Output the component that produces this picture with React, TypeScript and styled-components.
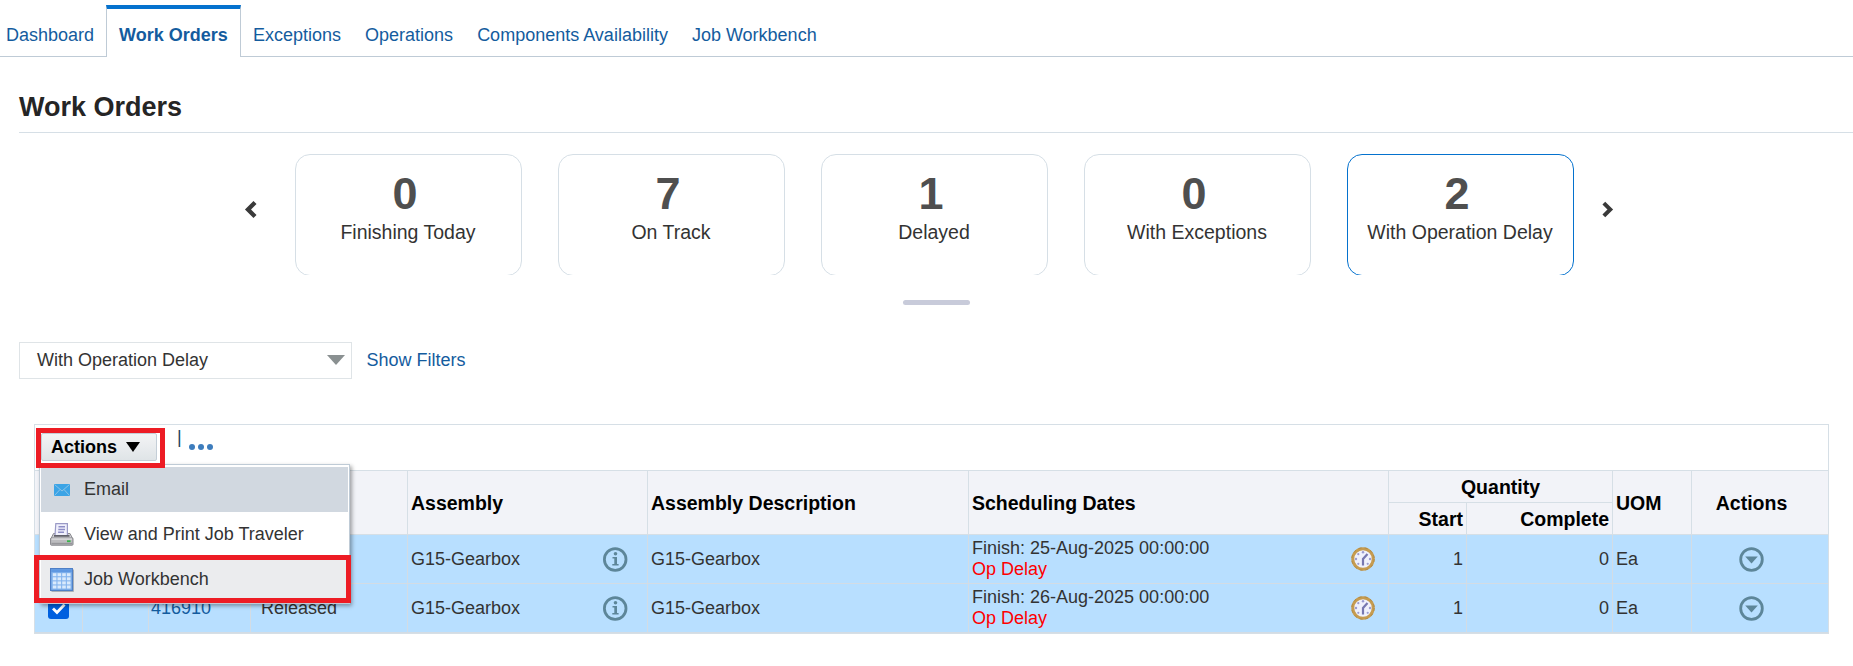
import React from 'react';
import styled, { createGlobalStyle } from 'styled-components';

const GlobalStyle = createGlobalStyle`
  * { box-sizing: border-box; }
  body { margin: 0; background: #fff; overflow: hidden; }
  #root { font-family: "Liberation Sans", Arial, sans-serif; font-size: 18px; color: #333; }
`;

const Page = styled.div`
  width: 1853px;
  height: 666px;
  overflow: hidden;
  display: flex;
  flex-direction: column;
`;

const TabBar = styled.nav`
  display: flex;
  height: 57px;
  padding-top: 5px;
`;

const Tab = styled.a<{ $active?: boolean; $first?: boolean }>`
  display: block;
  height: 52px;
  line-height: 20px;
  color: #145c9e;
  white-space: nowrap;
  padding: ${p => (p.$active ? '16px 11px 0 12px' : '20px 12px 0')};
  ${p => p.$first && 'padding-left: 6px; width: 106px;'}
  ${p => p.$active
    ? 'width: 135px; font-weight: bold; border: solid #bfcbd6; border-width: 4px 1px 0; border-top-color: #0572ce;'
    : 'border-bottom: 1px solid #bfcbd6;'}
`;

const TabFill = styled.div`
  flex: 1;
  border-bottom: 1px solid #bfcbd6;
`;

const Title = styled.h1`
  margin: 0 0 0 19px;
  height: 76px;
  padding-top: 34px;
  line-height: 32px;
  font-size: 27px;
  color: #252525;
  border-bottom: 1px solid #d6dfe6;
`;

const Carousel = styled.section`
  display: flex;
  height: 142px;
  padding: 21px 0 0 244px;
  overflow: hidden;
`;

const Arrow = styled.button<{ $next?: boolean }>`
  width: ${p => (p.$next ? '40px' : '51px')};
  height: 19px;
  margin: 46px 0 0;
  padding: 0 0 0 ${p => (p.$next ? '28px' : '0')};
  border: 0;
  background: none;
  display: flex;
`;

const Cards = styled.div`
  display: flex;
  gap: 36px;
`;

const Card = styled.div<{ $selected?: boolean }>`
  width: 227px;
  height: 122px;
  flex: none;
  border: 1px solid ${p => (p.$selected ? '#0572ce' : '#d6dfe6')};
  border-radius: 15px;
  display: flex;
  flex-direction: column;
  align-items: center;
  padding-top: 14px;
`;

const Count = styled.strong`
  font-size: 45px;
  line-height: 50px;
  color: #4f4f4f;
  padding-right: 7px;
`;

const CardLabel = styled.span`
  margin-top: 1px;
  padding-right: 1px;
  font-size: 19.5px;
  line-height: 24px;
  color: #333;
  white-space: nowrap;
`;

const Splitter = styled.div`
  width: 67px;
  height: 5px;
  margin: 25px 0 0 903px;
  border-radius: 3px;
  background: #c8cbda;
`;

const FilterBar = styled.div`
  display: flex;
  align-items: center;
  height: 37px;
  margin: 37px 0 0 19px;
`;

const Select = styled.div`
  display: flex;
  justify-content: space-between;
  align-items: center;
  width: 333px;
  height: 37px;
  padding: 0 6px 1px 17px;
  border: 1px solid #dfe4e7;
`;

const FilterLink = styled.a`
  margin-left: 14.5px;
  padding-bottom: 1px;
  color: #145c9e;
`;

const Panel = styled.section`
  position: relative;
  width: 1795px;
  margin: 45px 0 0 34px;
  border: 1px solid #d6dfe6;
`;

const Toolbar = styled.div`
  display: flex;
  height: 46px;
  padding: 3px 0 0 1px;
  border-bottom: 1px solid #d6dfe6;
`;

const Highlight = styled.div`
  width: 129px;
  height: 40px;
  flex: none;
  border: 5px solid #ed1c24;
  background: #fff;
  position: relative;
  z-index: 3;
`;

const ActionButton = styled.button`
  display: flex;
  align-items: center;
  gap: 9px;
  width: 116px;
  height: 28px;
  padding: 0 0 0 9px;
  border: 1px solid #c4ced7;
  border-radius: 2px;
  background: linear-gradient(#f3f4f5, #dfe4e7);
  font: bold 18px "Liberation Sans", Arial, sans-serif;
  color: #000;
`;

const Bar = styled.span`
  margin: -1px 0 0 12px;
  line-height: 20px;
  color: #1b3f5e;
`;

const Dots = styled.div`
  display: flex;
  gap: 3px;
  margin: 16px 0 0 7px;
  span { width: 6px; height: 6px; border-radius: 3px; background: #3d7dbd; }
`;

const Grid = styled.div`
  display: grid;
  grid-template-columns: 48px 66px 102px 157px 240px 321px 420px 78px 146px 79px 136px;
  grid-template-rows: 32px 32px 49px 49px;
`;

const Head = styled.div<{ $col: string; $row?: string; $align?: string; $last?: boolean }>`
  grid-column: ${p => p.$col};
  grid-row: ${p => p.$row || '1 / 3'};
  display: flex;
  align-items: center;
  justify-content: ${p => p.$align || 'flex-start'};
  padding: 1px ${p => (p.$last ? 20 : 3)}px 0 3px;
  border: solid #d6dfe6;
  border-width: 0 ${p => (p.$last ? 0 : 1)}px 1px 0;
  background: #f2f3f8;
  color: #000;
  font-size: 19.5px;
  font-weight: bold;
  white-space: nowrap;
`;

const Cell = styled.div<{ $align?: string; $last?: boolean }>`
  display: flex;
  align-items: center;
  justify-content: ${p => p.$align || 'flex-start'};
  padding: 0 ${p => (p.$last ? 20 : 3)}px 0 3px;
  border: solid #d3dce4;
  border-width: 0 ${p => (p.$last ? 0 : 1)}px 1px 0;
  background: #b8dfff;
  white-space: nowrap;
  line-height: 21px;
`;

const InfoCell = styled(Cell)`
  justify-content: space-between;
  padding-right: 19px;
`;

const DateCell = styled(Cell)`
  justify-content: space-between;
  padding: 0 13px 0 3px;
`;

const OrderCell = styled(Cell)`
  padding-left: 2px;
  color: #145c9e;
`;

const StatusCell = styled(Cell)`
  padding-left: 10px;
`;

const Late = styled.div`
  color: #f00;
`;

const Check = styled.span`
  width: 21px;
  height: 21px;
  border-radius: 3px;
  background: #0060df;
  display: flex;
`;

const Menu = styled.div`
  position: absolute;
  left: 4px;
  top: 39px;
  width: 311px;
  height: 140px;
  padding: 2px 1px 0;
  border: 1px solid #bfcbd6;
  background: #fff;
  box-shadow: 2px 2px 4px rgba(0, 0, 0, 0.35);
  z-index: 2;
`;

const MenuItem = styled.div<{ $bg?: string }>`
  display: flex;
  align-items: center;
  height: 45px;
  padding-left: 9px;
  background: ${p => p.$bg || '#fff'};
  svg { flex: none; margin-right: 10px; }
`;

const MenuHighlight = styled.div`
  position: absolute;
  left: -1px;
  top: 130px;
  width: 317px;
  height: 48px;
  border: 5px solid #ed1c24;
  z-index: 3;
`;

const Chevron = ({ flip }: { flip?: boolean }) => (
  <svg width="13" height="19" viewBox="0 0 13 19">
    <path d={flip ? 'M2 2.5 9 9.5l-7 7' : 'M11 2.5 4 9.5l7 7'} fill="none" stroke="#3a3a3a" strokeWidth="4.3" />
  </svg>
);

const Triangle = ({ w, h, fill }: { w: number; h: number; fill: string }) => (
  <svg width={w} height={h} viewBox="0 0 10 6" preserveAspectRatio="none">
    <path d="M0 0h10L5 6z" fill={fill} />
  </svg>
);

const InfoIcon = () => (
  <svg width="25" height="25" viewBox="0 0 25 25">
    <circle cx="12.2" cy="12.5" r="10.8" fill="none" stroke="#5d8699" strokeWidth="2.8" />
    <circle cx="12.5" cy="6.8" r="1.8" fill="#5d8699" />
    <path d="M9.5 10h4.5v7h1.6v1.6H9.3V17h2v-5.4H9.5z" fill="#5d8699" />
  </svg>
);

const DownIcon = () => (
  <svg width="25" height="25" viewBox="0 0 25 25">
    <circle cx="12.5" cy="12.5" r="10.8" fill="none" stroke="#5d8699" strokeWidth="2.8" />
    <path d="M6.2 9.6h12.6L12.5 16.4z" fill="#5d8699" />
  </svg>
);

const ClockIcon = () => (
  <svg width="24" height="24" viewBox="0 0 24 24">
    <circle cx="12" cy="12" r="10.2" fill="#eff1fc" stroke="#c69c50" strokeWidth="3" />
    <circle cx="12" cy="12" r="11.2" fill="none" stroke="#b08a48" strokeWidth="1" strokeDasharray="3 3" />
    <g fill="#9a9bd0">
      <circle cx="12" cy="5.2" r="1.2" /><circle cx="7.3" cy="7.2" r="1.1" />
      <circle cx="5" cy="12" r="1.2" /><circle cx="19" cy="12" r="1.2" />
      <circle cx="7.3" cy="16.8" r="1.1" /><circle cx="16.7" cy="16.8" r="1.1" />
    </g>
    <path d="M12 18.5V12L16.5 7" fill="none" stroke="#7778b0" strokeWidth="2.2" />
  </svg>
);

const MailIcon = () => (
  <svg width="24" height="24" viewBox="0 0 24 24">
    <rect x="4" y="6" width="16" height="12" fill="#3ba4e6" />
    <path d="M4.5 6.5l7.5 6.5 7.5-6.5M4.5 17.5l5.5-6M19.5 17.5l-5.5-6" fill="none" stroke="#8cc3e6" strokeWidth="1" />
  </svg>
);

const PrinterIcon = () => (
  <svg width="24" height="24" viewBox="0 0 24 24">
    <path d="M3.5 10.5h16.5l2.8 5.5H.8z" fill="#cfcfd3" stroke="#8c8c91" strokeWidth="1" />
    <path d="M5.8.7h11.6v11.8H5z" fill="#f0f0fc" stroke="#9a9ac6" strokeWidth="1.2" />
    <path d="M8.5 3.8H15M8.3 6.5H15M8.1 9.2H14" stroke="#8e8ec6" strokeWidth="1.4" />
    <path d="M4 12.9h15.5" stroke="#5a5a60" strokeWidth="1.6" />
    <rect x=".6" y="15" width="22.4" height="7.2" rx=".8" fill="#bcbcbf" stroke="#85858a" strokeWidth="1" />
    <path d="M1.5 16h20.5" stroke="#e6e6e8" strokeWidth="1.2" />
    <path d="M1.5 20.6h20.5" stroke="#96969a" strokeWidth="1.6" />
    <rect x="17" y="17.3" width="3.6" height="1.8" fill="#38b34a" />
  </svg>
);

const TableIcon = () => (
  <svg width="24" height="24" viewBox="0 0 24 24">
    <rect x="1.5" y="1.5" width="22.3" height="22.3" fill="#9aa2ab" />
    <rect x=".6" y=".6" width="21.8" height="21.8" fill="#84b4ee" stroke="#4f80c6" strokeWidth="1.2" />
    <rect x="1.2" y="1.2" width="20.6" height="3" fill="#5e98e2" />
    <g fill="#d9eafc">
      {[5.2, 9.3, 13.4, 17.5].map(y => [2.8, 7.5, 12.2, 16.9].map(x => <rect key={`${x}-${y}`} x={x} y={y} width="3.6" height="3" />))}
    </g>
  </svg>
);

const CheckBox = () => (
  <Check>
    <svg width="21" height="21" viewBox="0 0 21 21"><path d="M5 10.5l4 4 7.5-8" fill="none" stroke="#fff" strokeWidth="2.8" /></svg>
  </Check>
);

const tabs = ['Exceptions', 'Operations', 'Components Availability', 'Job Workbench'];

const cards = [
  { count: 0, label: 'Finishing Today' },
  { count: 7, label: 'On Track' },
  { count: 1, label: 'Delayed' },
  { count: 0, label: 'With Exceptions' },
  { count: 2, label: 'With Operation Delay', selected: true },
];

const rows = [
  { order: '', status: '', finish: '25-Aug-2025 00:00:00' },
  { order: '416910', status: 'Released', finish: '26-Aug-2025 00:00:00' },
];

export default function App() {
  return (
    <Page>
      <GlobalStyle />
      <TabBar>
        <Tab $first>Dashboard</Tab>
        <Tab $active>Work Orders</Tab>
        {tabs.map(t => <Tab key={t}>{t}</Tab>)}
        <TabFill />
      </TabBar>
      <Title>Work Orders</Title>
      <Carousel>
        <Arrow><Chevron /></Arrow>
        <Cards>
          {cards.map(c => (
            <Card key={c.label} $selected={c.selected}>
              <Count>{c.count}</Count>
              <CardLabel>{c.label}</CardLabel>
            </Card>
          ))}
        </Cards>
        <Arrow $next><Chevron flip /></Arrow>
      </Carousel>
      <Splitter />
      <FilterBar>
        <Select>With Operation Delay<Triangle w={18} h={10} fill="#8a9091" /></Select>
        <FilterLink>Show Filters</FilterLink>
      </FilterBar>
      <Panel>
        <Toolbar>
          <Highlight>
            <ActionButton>Actions<Triangle w={14} h={10} fill="#000" /></ActionButton>
          </Highlight>
          <Bar>|</Bar>
          <Dots><span /><span /><span /></Dots>
        </Toolbar>
        <Grid>
          <Head $col="1" />
          <Head $col="2" />
          <Head $col="3" />
          <Head $col="4" />
          <Head $col="5">Assembly</Head>
          <Head $col="6">Assembly Description</Head>
          <Head $col="7">Scheduling Dates</Head>
          <Head $col="8 / 10" $row="1" $align="center">Quantity</Head>
          <Head $col="8" $row="2" $align="flex-end">Start</Head>
          <Head $col="9" $row="2" $align="flex-end">Complete</Head>
          <Head $col="10">UOM</Head>
          <Head $col="11" $align="center" $last>Actions</Head>
          {rows.map(r => (
            <React.Fragment key={r.finish}>
              <Cell $align="center"><CheckBox /></Cell>
              <Cell />
              <OrderCell>{r.order}</OrderCell>
              <StatusCell>{r.status}</StatusCell>
              <InfoCell>G15-Gearbox<InfoIcon /></InfoCell>
              <Cell>G15-Gearbox</Cell>
              <DateCell>
                <div>Finish: {r.finish}<Late>Op Delay</Late></div>
                <ClockIcon />
              </DateCell>
              <Cell $align="flex-end">1</Cell>
              <Cell $align="flex-end">0</Cell>
              <Cell>Ea</Cell>
              <Cell $align="center" $last><DownIcon /></Cell>
            </React.Fragment>
          ))}
        </Grid>
        <Menu>
          <MenuItem $bg="#d1d8e0"><MailIcon />Email</MenuItem>
          <MenuItem><PrinterIcon />View and Print Job Traveler</MenuItem>
          <MenuItem $bg="#ebecee"><TableIcon />Job Workbench</MenuItem>
        </Menu>
        <MenuHighlight />
      </Panel>
    </Page>
  );
}
